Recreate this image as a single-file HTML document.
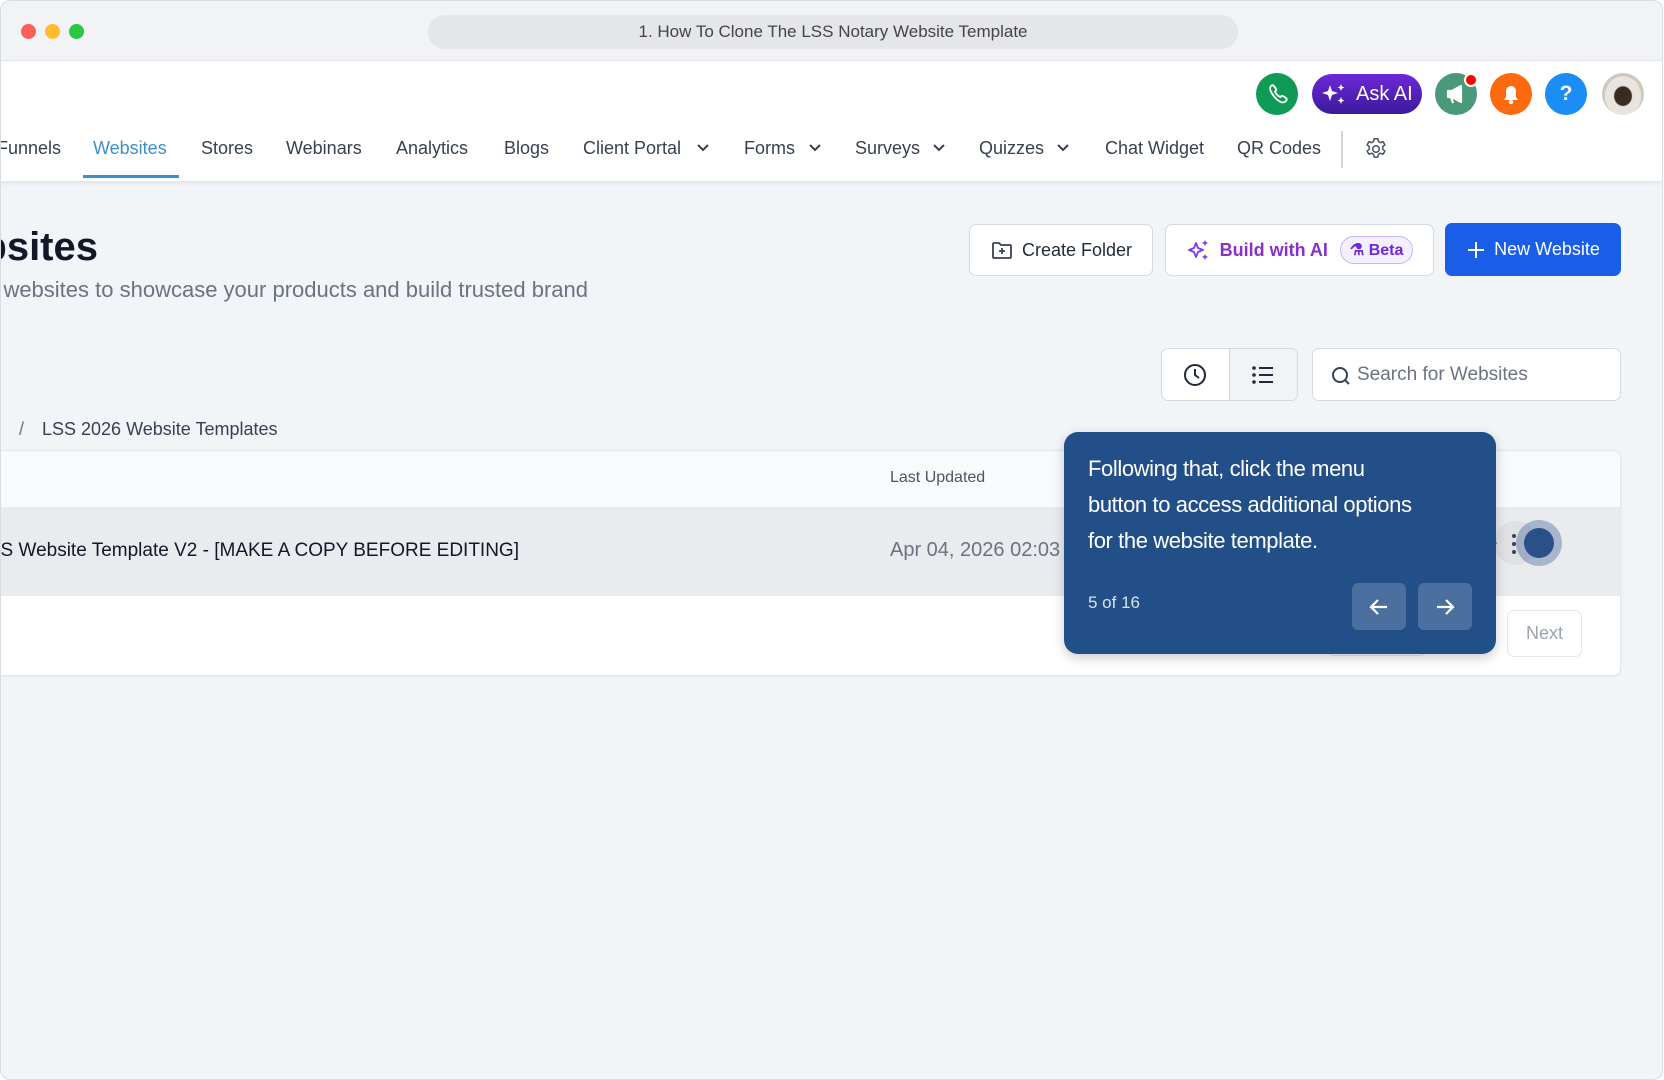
<!DOCTYPE html>
<html><head><meta charset="utf-8"><style>
*{box-sizing:border-box;margin:0;padding:0}
body{width:1664px;height:1080px;overflow:hidden;background:#fff;font-family:"Liberation Sans",sans-serif;position:relative}
.win{position:absolute;left:0;top:0;width:1663px;height:1080px;border:1px solid #d9dce1;border-radius:10px;overflow:hidden;background:#f1f5f8}
.tb{position:absolute;left:0;top:0;width:100%;height:60px;background:#f2f3f5;border-bottom:1px solid #e2e4e8}
.dot{position:absolute;top:23px;width:15px;height:15px;border-radius:50%}
.url{position:absolute;left:427px;top:14px;width:810px;height:34px;border-radius:17px;background:#e4e6ea;text-align:center;line-height:34px;font-size:17px;color:#444}
.hdr{position:absolute;left:0;top:60px;width:100%;height:120px;background:#fff;box-shadow:0 2px 4px rgba(0,0,0,.08)}
.a{position:absolute}
.nav{position:absolute;top:137px;font-size:18px;color:#374151;white-space:nowrap}
.chev{position:absolute;top:142px}
.ic{position:absolute;top:72px;width:42px;height:42px;border-radius:50%}
.btn{position:absolute;background:#fff;border:1px solid #d5d9e0;border-radius:7px;font-size:18px;color:#1f2937;display:flex;align-items:center;justify-content:center;gap:8px;font-weight:bold}
</style></head><body>
<div class="win">
<div class="tb">
<div class="dot" style="left:20px;background:#fe5f57"></div>
<div class="dot" style="left:44px;background:#febc2e"></div>
<div class="dot" style="left:68px;background:#28c840"></div>
<div class="url">1. How To Clone The LSS Notary Website Template</div>
</div>
<div class="hdr"></div>
<div class="ic" style="left:1255px;background:#0f9a55"><svg width="42" height="42" viewBox="0 0 42 42"><path d="M15 13c1-1 2-1 3 0l2 3c.5 1 0 2-1 2.5 1 2.5 3 4.5 5.5 5.5.5-1 1.5-1.5 2.5-1l3 2c1 1 1 2 0 3-2 2-5 2-9-1.5S12 16 15 13z" fill="none" stroke="#fff" stroke-width="1.8"/></svg></div>
<div class="a" style="left:1311px;top:73px;width:110px;height:40px;border-radius:20px;background:linear-gradient(#6d28d9,#3b1a9a);color:#fff;font-size:20px;line-height:40px;padding-left:44px">Ask AI</div>
<svg class="a" style="left:1320px;top:80px" width="26" height="26" viewBox="0 0 26 26"><path d="M9 4l2 6 6 2-6 2-2 6-2-6-6-2 6-2z" fill="#fff"/><path d="M20 3l1 2.5 2.5 1-2.5 1-1 2.5-1-2.5-2.5-1 2.5-1zM20 16l1 2.5 2.5 1-2.5 1-1 2.5-1-2.5-2.5-1 2.5-1z" fill="#fff"/></svg>
<div class="ic" style="left:1434px;background:#4a9a7a"><svg width="42" height="42" viewBox="0 0 42 42"><path d="M13 18h4l9-5v16l-9-5h-4z M16 24l2 6" fill="#fff" stroke="#fff" stroke-width="2.2" stroke-linejoin="round"/></svg></div>
<div class="a" style="left:1463px;top:72px;width:14px;height:14px;border-radius:50%;background:#f00;border:2px solid #fff"></div>
<div class="ic" style="left:1489px;background:#fb6a0f"><svg width="42" height="42" viewBox="0 0 42 42"><path d="M14 27h14l-2-3v-6a5 5 0 0 0-10 0v6z" fill="#fff"/><circle cx="21" cy="29" r="2.2" fill="#fff"/></svg></div>
<div class="ic" style="left:1544px;background:#1a8ef5;color:#fff;font-size:21px;font-weight:bold;text-align:center;line-height:42px">?</div>
<div class="ic" style="left:1601px;background:radial-gradient(ellipse at 50% 55%,#3a2a22 0 28%,#e9e4dd 32% 60%,#cfc8bb 62%)"></div>
<div class="nav" style="left:-4px">Funnels</div>
<div class="nav" style="left:92px;color:#3b91cf">Websites</div>
<div class="a" style="left:82px;top:174px;width:96px;height:3px;background:#3b91cf"></div>
<div class="nav" style="left:200px">Stores</div>
<div class="nav" style="left:285px">Webinars</div>
<div class="nav" style="left:395px">Analytics</div>
<div class="nav" style="left:503px">Blogs</div>
<div class="nav" style="left:582px">Client Portal</div>
<div class="nav" style="left:743px">Forms</div>
<div class="nav" style="left:854px">Surveys</div>
<div class="nav" style="left:978px">Quizzes</div>
<div class="nav" style="left:1104px">Chat Widget</div>
<div class="nav" style="left:1236px">QR Codes</div>
<svg class="chev" style="left:695px" width="14" height="10"><path d="M2 2l5 5 5-5" fill="none" stroke="#374151" stroke-width="2"/></svg>
<svg class="chev" style="left:807px" width="14" height="10"><path d="M2 2l5 5 5-5" fill="none" stroke="#374151" stroke-width="2"/></svg>
<svg class="chev" style="left:931px" width="14" height="10"><path d="M2 2l5 5 5-5" fill="none" stroke="#374151" stroke-width="2"/></svg>
<svg class="chev" style="left:1055px" width="14" height="10"><path d="M2 2l5 5 5-5" fill="none" stroke="#374151" stroke-width="2"/></svg>
<div class="a" style="left:1340px;top:130px;width:2px;height:37px;background:#d1d5db"></div>
<svg class="a" style="left:1362px;top:135px" width="26" height="26" viewBox="0 0 24 24"><path d="M10.3 2.5h3.4l.5 2.6 1.8 1 2.5-.9 1.7 2.9-2 1.8v2.2l2 1.8-1.7 2.9-2.5-.9-1.8 1-.5 2.6h-3.4l-.5-2.6-1.8-1-2.5.9-1.7-2.9 2-1.8v-2.2l-2-1.8 1.7-2.9 2.5.9 1.8-1z" fill="none" stroke="#4b5563" stroke-width="1.4" stroke-linejoin="round"/><circle cx="12" cy="12" r="3" fill="none" stroke="#4b5563" stroke-width="1.4"/></svg>
<div class="a" style="right:1564px;top:224px;font-size:40px;font-weight:bold;color:#111827;white-space:nowrap">Websites</div>
<div class="a" style="right:1074px;top:276px;font-size:22px;color:#6b7280;white-space:nowrap">Build websites to showcase your products and build trusted brand</div>
<div class="btn" style="left:968px;top:223px;width:184px;height:52px;font-weight:normal;font-size:18px"><svg width="24" height="24" viewBox="0 0 24 24"><path d="M3 6a1 1 0 0 1 1-1h5l2 2h9a1 1 0 0 1 1 1v11a1 1 0 0 1-1 1H4a1 1 0 0 1-1-1z M12 10v6M9 13h6" fill="none" stroke="#374151" stroke-width="1.8"/></svg>Create Folder</div>
<div class="btn" style="left:1164px;top:223px;width:269px;height:52px;color:#8b2fc9"><svg width="26" height="26" viewBox="0 0 26 26"><path d="M10 6l2 5 5 2-5 2-2 5-2-5-5-2 5-2z" fill="none" stroke="#7c3aed" stroke-width="1.8" stroke-linejoin="round"/><path d="M19 3l1 2 2 1-2 1-1 2-1-2-2-1 2-1zM19 17l1 2 2 1-2 1-1 2-1-2-2-1 2-1z" fill="#7c3aed"/></svg>Build with AI<span style="margin-left:4px;border:1px solid #c4b5fd;background:#f3efff;border-radius:14px;padding:3px 9px;font-size:16px;color:#6d28d9">⚗ Beta</span></div>
<div class="btn" style="left:1444px;top:222px;width:176px;height:53px;background:#1a5de6;border-color:#1a5de6;color:#fff;font-weight:normal">
<svg width="20" height="20"><path d="M10 2v16M2 10h16" stroke="#fff" stroke-width="2"/></svg>New Website</div>
<div class="a" style="left:1160px;top:347px;width:137px;height:53px;border:1px solid #d5d9e0;border-radius:7px;background:#fff;overflow:hidden">
<div class="a" style="left:67px;top:0;width:70px;height:53px;background:#f1f3f6;border-left:1px solid #d5d9e0"></div>
<svg class="a" style="left:20px;top:13px" width="26" height="26" viewBox="0 0 26 26"><circle cx="13" cy="13" r="10" fill="none" stroke="#1f2937" stroke-width="2"/><path d="M13 7v6l4 3" fill="none" stroke="#1f2937" stroke-width="2"/></svg>
<svg class="a" style="left:88px;top:14px" width="26" height="24" viewBox="0 0 26 24"><circle cx="4" cy="5" r="1.8" fill="#1f2937"/><circle cx="4" cy="12" r="1.8" fill="#1f2937"/><circle cx="4" cy="19" r="1.8" fill="#1f2937"/><path d="M9 5h14M9 12h14M9 19h14" stroke="#1f2937" stroke-width="2"/></svg>
</div>
<div class="a" style="left:1311px;top:347px;width:309px;height:53px;border:1px solid #d5d9e0;border-radius:7px;background:#fff;font-size:19px;color:#6b7280;line-height:51px;padding-left:44px">Search for Websites
<svg class="a" style="left:17px;top:16px" width="22" height="22" viewBox="0 0 22 22"><circle cx="10" cy="10" r="7" fill="none" stroke="#374151" stroke-width="2"/><path d="M15 15l4 4" stroke="#374151" stroke-width="2"/></svg></div>
<div class="a" style="left:18px;top:418px;font-size:18px;color:#6b7280">/</div>
<div class="a" style="left:41px;top:418px;font-size:18px;color:#374151">LSS 2026 Website Templates</div>
<div class="a" style="left:-10px;top:449px;width:1630px;height:226px;background:#fff;border:1px solid #e3e6ea;border-radius:8px;overflow:hidden;box-shadow:0 1px 3px rgba(0,0,0,.05)">
<div class="a" style="left:0;top:0;width:100%;height:56px;background:#f8fafc"></div>
<div class="a" style="left:0;top:56px;width:100%;height:89px;background:#e9ebef"></div>
</div>
<div class="a" style="left:889px;top:468px;font-size:16px;color:#4b5563">Last Updated</div>
<div class="a" style="right:1143px;top:539px;font-size:19px;color:#111827;white-space:nowrap">LSS Website Template V2 - [MAKE A COPY BEFORE EDITING]</div>
<div class="a" style="left:889px;top:538px;font-size:20px;color:#6b7280;white-space:nowrap">Apr 04, 2026 02:03</div>
<div class="a" style="left:1326px;top:609px;width:100px;height:46px;border:1px solid #e3e6ea;border-radius:7px;background:#fff"></div>
<div class="a" style="left:1506px;top:609px;width:75px;height:47px;border:1px solid #e3e6ea;border-radius:7px;background:#fff;font-size:18px;color:#9ca3af;text-align:center;line-height:45px">Next</div>
<div class="a" style="left:1493px;top:520px;width:44px;height:44px;border-radius:50%;background:#dfe1e5"></div>
<div class="a" style="left:1511px;top:533px;width:4px;height:4px;border-radius:50%;background:#374151;box-shadow:0 8px 0 #374151,0 16px 0 #374151"></div>
<div class="a" style="left:1515px;top:519px;width:46px;height:46px;border-radius:50%;background:rgba(46,84,140,.35)"></div>
<div class="a" style="left:1523px;top:527px;width:30px;height:30px;border-radius:50%;background:#2a5089"></div>
<div class="a" style="left:1063px;top:431px;width:432px;height:222px;background:#224f88;border-radius:14px;box-shadow:0 4px 12px rgba(0,0,0,.2)"></div>
<div class="a" style="left:1490px;top:536px;width:0;height:0;border-top:6px solid transparent;border-bottom:6px solid transparent;border-left:6px solid #224f88"></div>
<div class="a" style="left:1087px;top:450px;font-size:22px;line-height:36px;color:#fff;white-space:nowrap;letter-spacing:-0.4px">Following that, click the menu<br>button to access additional options<br>for the website template.</div>
<div class="a" style="left:1087px;top:592px;font-size:17px;color:#d9e2ef">5 of 16</div>
<div class="a" style="left:1351px;top:582px;width:54px;height:47px;border-radius:6px;background:#4b6f9e"></div>
<div class="a" style="left:1417px;top:582px;width:54px;height:47px;border-radius:6px;background:#4b6f9e"></div>
<svg class="a" style="left:1367px;top:595px" width="22" height="22"><path d="M19 11H3M10 4l-7 7 7 7" fill="none" stroke="#fff" stroke-width="2.2"/></svg>
<svg class="a" style="left:1433px;top:595px" width="22" height="22"><path d="M3 11h16M12 4l7 7-7 7" fill="none" stroke="#fff" stroke-width="2.2"/></svg>
</div>
</body></html>
